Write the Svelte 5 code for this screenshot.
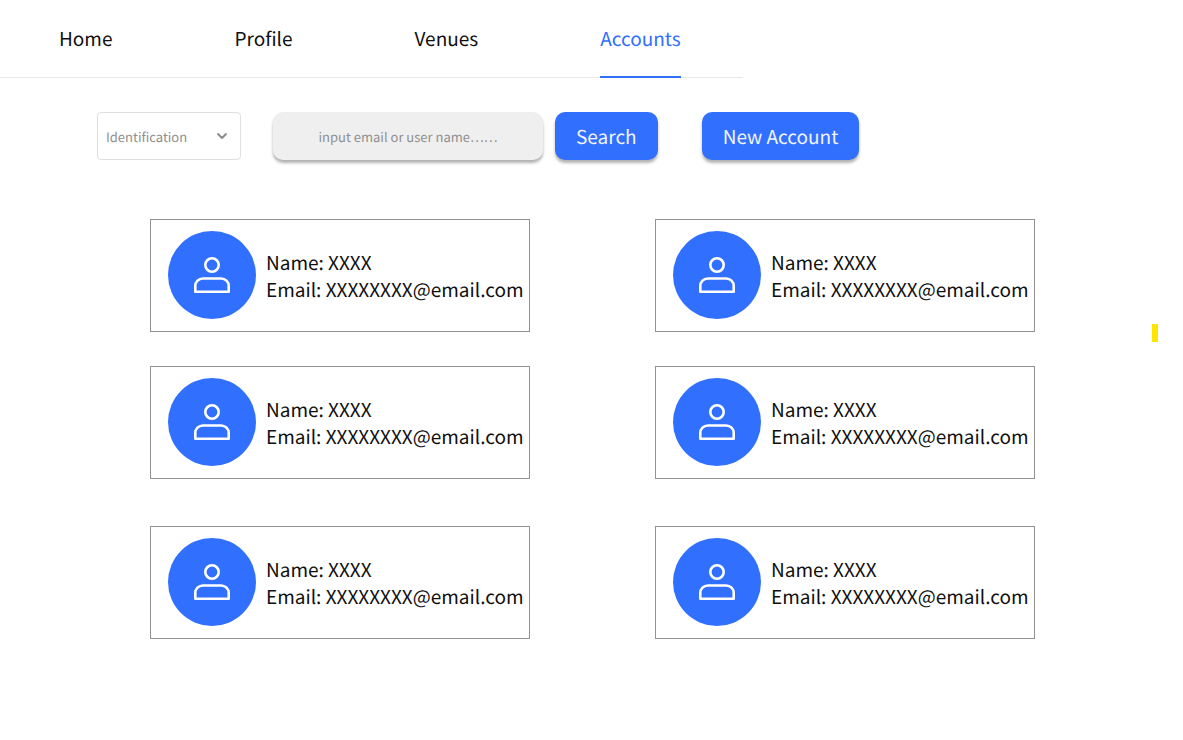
<script>
  const tabs = ['Home', 'Profile', 'Venues', 'Accounts'];
  let active = $state('Accounts');
  let query = $state('');
  const accounts = Array.from({ length: 6 }, () => ({
    name: 'XXXX',
    email: 'XXXXXXXX@email.com'
  }));
</script>

<div class="page">
  <nav>
    {#each tabs as tab}
      <a
        href="#{tab.toLowerCase()}"
        class:active={tab === active}
        aria-current={tab === active ? 'page' : undefined}
        onclick={() => (active = tab)}>{tab}</a>
    {/each}
  </nav>

  <form class="toolbar" onsubmit={(e) => e.preventDefault()}>
    <div class="select">
      <select aria-label="Identification">
        <option>Identification</option>
      </select>
      <svg viewBox="0 0 12 8" aria-hidden="true"><path d="M2 2l4 4 4-4" /></svg>
    </div>
    <input type="text" aria-label="Email or user name" placeholder="input email or user name……" bind:value={query} />
    <button type="submit" class="search">Search</button>
    <button type="button" class="create">New Account</button>
  </form>

  <main>
    {#each accounts as account}
      <article>
        <div class="avatar">
          <svg viewBox="0 0 40 40" aria-hidden="true">
            <circle cx="20" cy="10" r="6.7" />
            <path d="M3.3 36.7v-5.7a7.5 7.5 0 0 1 7.5-7.5h18.4a7.5 7.5 0 0 1 7.5 7.5v5.7z" />
          </svg>
        </div>
        <div class="details">
          <div>Name: {account.name}</div>
          <div>Email: {account.email}</div>
        </div>
      </article>
    {/each}
  </main>
  <span class="marker"></span>
</div>

<style>
  :global(body) {
    background: #fff;
  }
  .page {
    position: relative;
    font-family: 'Noto Sans CJK SC', sans-serif;
    font-size: 19px;
    color: #101010;
    text-rendering: geometricPrecision;
  }
  nav {
    display: flex;
    gap: 122px;
    width: fit-content;
    box-sizing: border-box;
    height: 78px;
    padding: 0 62px 0 59px;
    border-bottom: 1px solid #e8e8e8;
  }
  nav a {
    box-sizing: border-box;
    height: 78px;
    line-height: 78px;
    color: inherit;
    text-decoration: none;
  }
  nav a.active {
    color: #316fff;
    border-bottom: 2px solid #316fff;
  }
  .toolbar {
    display: flex;
    align-items: center;
    padding: 34px 97px 0;
  }
  .select {
    position: relative;
    flex: 0 0 144px;
    margin-right: 32px;
  }
  select {
    appearance: none;
    display: block;
    box-sizing: border-box;
    width: 100%;
    height: 48px;
    padding: 0 32px 0 8px;
    border: 1px solid #dfdfdf;
    border-radius: 4px;
    background: #fff;
    color: #8f8f8f;
    font: 13px 'Noto Sans CJK SC', sans-serif;
    text-rendering: inherit;
  }
  .select svg {
    position: absolute;
    right: 13px;
    top: 20px;
    width: 12px;
    height: 8px;
    fill: none;
    stroke: #888;
    stroke-width: 1.8;
    stroke-linecap: round;
    stroke-linejoin: round;
    pointer-events: none;
  }
  input {
    box-sizing: border-box;
    flex: 0 1 270px;
    min-width: 0;
    height: 48px;
    margin-right: 12px;
    padding: 0 16px;
    border: 0;
    border-radius: 10px;
    background: #efefef;
    box-shadow: 0 3px 3px rgba(0, 0, 0, 0.3);
    color: #101010;
    font: 13px 'Noto Sans CJK SC', sans-serif;
    text-align: center;
    text-rendering: inherit;
  }
  input::placeholder {
    color: #8f8f8f;
    opacity: 1;
  }
  button {
    height: 48px;
    padding: 0 21px;
    border: 0;
    border-radius: 10px;
    background: #316fff;
    box-shadow: 0 3px 3px rgba(0, 0, 0, 0.3);
    color: #f0f4ff;
    font: 19px 'Noto Sans CJK SC', sans-serif;
    text-rendering: inherit;
    white-space: nowrap;
  }
  .create {
    margin-left: 44px;
  }
  main {
    display: grid;
    grid-template-columns: 1fr 1fr;
    column-gap: 125px;
    row-gap: 34px;
    padding: 59px 148px 48px 150px;
  }
  article {
    display: flex;
    align-items: center;
    gap: 10px;
    box-sizing: border-box;
    min-height: 113px;
    padding: 0 0 2px 17px;
    border: 1px solid #929292;
  }
  article:nth-child(n + 5) {
    margin-top: 13px;
  }
  .avatar {
    display: grid;
    place-items: center;
    flex: none;
    width: 88px;
    height: 88px;
    border-radius: 50%;
    background: #316fff;
  }
  .avatar svg {
    width: 40px;
    height: 40px;
    fill: none;
    stroke: #fff;
    stroke-width: 2.6;
    stroke-linejoin: round;
  }
  .details {
    padding-top: 2px;
    line-height: 27px;
    white-space: nowrap;
  }
  .marker {
    position: absolute;
    top: 324px;
    right: 25px;
    width: 6px;
    height: 18px;
    background: #ffe500;
  }
</style>
